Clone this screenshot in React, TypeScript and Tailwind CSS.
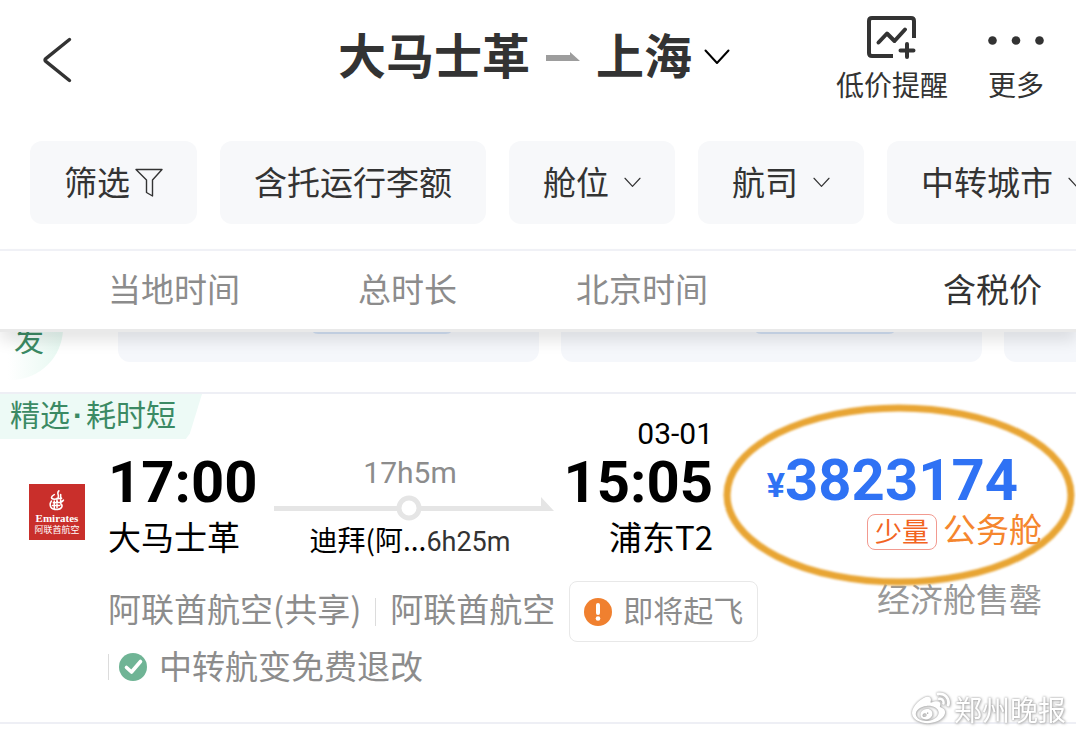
import React from 'react';
import { FaWeibo } from 'react-icons/fa6';

const FILTERS = [
  { label: '筛选', icon: 'funnel' },
  { label: '含托运行李额', icon: 'none' },
  { label: '舱位', icon: 'chevron' },
  { label: '航司', icon: 'chevron' },
  { label: '中转城市', icon: 'chevron' },
];

const Chevron: React.FC<{ className: string; stroke: number }> = ({ className, stroke }) => (
  <svg viewBox="0 0 26 16" className={className} fill="none" stroke="currentColor" strokeWidth={stroke} strokeLinecap="round" strokeLinejoin="round">
    <path d="M1.5 1.5 L13 14 L24.5 1.5" />
  </svg>
);

const Funnel: React.FC = () => (
  <svg viewBox="0 0 28 30" className="w-7 h-[30px] mt-1 ml-[5px] shrink-0" fill="none" stroke="#333" strokeWidth="1.4" strokeLinejoin="round">
    <path d="M1 1.5 H27 L17.5 12 V28 L11.5 24.5 V12 Z" />
  </svg>
);

const Header: React.FC = () => (
  <header className="grid grid-cols-[1fr_auto_1fr] items-center pt-4 pb-[37px] pl-6 pr-8 text-[#333]">
    <button aria-label="返回" className="w-12 h-14 flex items-center justify-end">
      <svg viewBox="0 0 30 46" className="w-[30px] h-[46px]" fill="none" stroke="currentColor" strokeWidth="3.4" strokeLinecap="round" strokeLinejoin="round">
        <path d="M27.5 2.5 L3.8 21.6 Q2.2 23 3.8 24.4 L27.5 43.5" />
      </svg>
    </button>
    <button className="flex items-center pb-3.5">
      <h1 className="flex items-center text-[48px] leading-[56px] font-bold">
        大马士革
        <svg viewBox="0 0 34 10" className="w-[34px] h-[10px] mx-4 mt-2">
          <path d="M0 3 H24 V0 L34 9 H0 Z" fill="#9d9d9d" />
        </svg>
        上海
      </h1>
      <Chevron className="w-[26px] h-4 ml-3 mt-2 text-black" stroke={2} />
    </button>
    <div className="flex justify-end gap-10">
      <button className="flex flex-col items-center">
        <svg viewBox="0 0 50 44" className="w-[50px] h-11" fill="none" stroke="currentColor" strokeWidth="4" strokeLinejoin="round">
          <path d="M47 22 V5 Q47 2 44 2 H5 Q2 2 2 5 V37 Q2 40 5 40 H26" />
          <path d="M11.5 26.5 L20 17.5 L27.5 25 L38 13.5" strokeLinecap="round" />
          <path d="M40 28 V41 M33.5 34.5 H46.5" strokeLinecap="round" />
        </svg>
        <span className="text-[28px] leading-10 mt-1 whitespace-nowrap">低价提醒</span>
      </button>
      <button className="flex flex-col items-center">
        <svg viewBox="0 0 56 44" className="w-14 h-11" fill="currentColor">
          <circle cx="4.5" cy="24.5" r="4.3" />
          <circle cx="28" cy="24.5" r="4.3" />
          <circle cx="51.5" cy="24.5" r="4.3" />
        </svg>
        <span className="text-[28px] leading-10 mt-1 whitespace-nowrap">更多</span>
      </button>
    </div>
  </header>
);

const FilterBar: React.FC = () => (
  <nav className="flex gap-[23px] pl-[30px] pb-[25px] overflow-hidden">
    {FILTERS.map((filter) => (
      <button
        key={filter.label}
        className="flex items-center shrink-0 px-[34px] pb-1 h-[83px] rounded-xl bg-[#f7f8fa] text-[33px] leading-[48px] text-[#333]"
      >
        {filter.label}
        {filter.icon === 'funnel' && <Funnel />}
        {filter.icon === 'chevron' && <Chevron className="w-[17px] h-[11px] ml-[15px] mt-1" stroke={1.8} />}
      </button>
    ))}
  </nav>
);

const ColumnTitles: React.FC = () => (
  <div className="relative z-10 grid grid-cols-[250px_218px_1fr_auto] items-center h-20 pb-1 pl-[108px] pr-[34px] border-t-2 border-[#f0f1f6] bg-white text-[33px] leading-[48px] text-[#8c8c8c] shadow-[0_3px_0_#e9e9e9,0_12px_14px_0_rgba(0,0,0,0.1)]">
    <span>当地时间</span>
    <span>总时长</span>
    <span>北京时间</span>
    <span className="text-[#333]">含税价</span>
  </div>
);

const PreviousFlight: React.FC = () => (
  <div className="flex items-end h-[63px] overflow-hidden">
    <div className="shrink-0 w-[55px] ml-2 mb-3 h-24 pl-1.5 pt-[36px] rounded-br-[52px] bg-linear-to-r from-white to-[#e6f8f1] text-[30px] leading-9 text-[#3b8a64]">
      发
    </div>
    <div className="flex gap-[22px] ml-[55px] mb-[30px]">
      {[0, 1, 2].map((card) => (
        <div key={card} className="shrink-0 w-[421px] h-20 pl-[192px] rounded-xl bg-[#f5f7fb]">
          <div className="w-[144px] h-[52px] rounded-lg border-2 border-[#d3e1f5]" />
        </div>
      ))}
    </div>
  </div>
);

const AirlineLogo: React.FC = () => (
  <div className="w-14 h-14 mb-[26px] shrink-0 flex flex-col items-center bg-[#c92f2b] text-white">
    <svg viewBox="0 0 20 24" className="w-5 h-[22px] mt-1.5 shrink-0" fill="none" stroke="white" strokeWidth="1.7" strokeLinecap="round">
      <path d="M12 1 C9 4 13 5 11 9 M7 5 C3 7 3 10 7 10 L15 9 M10 9 V19 M14 5 V14 M17 11 C15 15 12 13 6 14" />
      <path d="M4 12 C1 16 3 22 9 21 C15 22 17 17 14 15 M5 17 H13 M7 12 V20" />
    </svg>
    <span className="font-['Liberation_Serif','Noto_Sans_CJK_SC',serif] font-bold text-[11px] leading-3">Emirates</span>
    <span className="text-[9px] leading-3 whitespace-nowrap">阿联酋航空</span>
  </div>
);

const Route: React.FC = () => (
  <div className="flex items-end">
    <div className="w-[148px] whitespace-nowrap">
      <div className="font-[Roboto,sans-serif] font-bold text-[58px] leading-[60px]">17:00</div>
      <div className="text-[33px] leading-[48px] pb-1.5">大马士革</div>
    </div>
    <div className="flex flex-col items-center w-[280px] ml-[18px] whitespace-nowrap">
      <div className="pr-2 font-[Roboto,sans-serif] text-[30px] leading-9 text-[#8c8c8c]">17h5m</div>
      <svg viewBox="0 0 280 26" className="w-[280px] h-[26px] mt-1">
        <path d="M0 11 H267 V2 L280 16 H0 Z" fill="#e5e5e5" />
        <circle cx="135" cy="13" r="10" fill="white" stroke="#e5e5e5" strokeWidth="5" />
      </svg>
      <div className="pr-2 text-[28px] leading-9 pb-1.5">
        迪拜(阿...<span className="font-[Roboto,sans-serif] text-[27px] text-[#333]">6h25m</span>
      </div>
    </div>
    <div className="w-[146px] ml-[13px] flex flex-col items-end whitespace-nowrap">
      <div className="font-[Roboto,sans-serif] text-[30px] leading-9">03-01</div>
      <div className="font-[Roboto,sans-serif] font-bold text-[58px] leading-[60px]">15:05</div>
      <div className="text-[33px] leading-[48px] pb-1.5">浦东T2</div>
    </div>
  </div>
);

const Notices: React.FC = () => (
  <div className="text-[33px] text-[#8c8c8c] whitespace-nowrap">
    <div className="flex items-center mt-[15px]">
      <span className="leading-[48px] pb-2">阿联酋航空(共享)</span>
      <span className="w-px h-7 mx-[14px] bg-[#dcdcdc]" />
      <span className="leading-[48px] pb-2">阿联酋航空</span>
      <span className="flex items-center h-[61px] ml-[14px] px-[14px] rounded-lg border border-[#e8e8e8] text-[30px] leading-10">
        <svg viewBox="0 0 28 28" className="w-7 h-7 mr-[11px]">
          <circle cx="14" cy="14" r="14" fill="#f0802f" />
          <rect x="12" y="5" width="4" height="12" rx="2" fill="white" />
          <circle cx="14" cy="20.5" r="2.3" fill="white" />
        </svg>
        <span className="pb-1.5">即将起飞</span>
      </span>
    </div>
    <div className="flex items-center">
      <span className="w-px h-[26px] bg-[#dcdcdc]" />
      <svg viewBox="0 0 28 28" className="w-7 h-7 ml-[10px] mr-3">
        <circle cx="14" cy="14" r="14" fill="#6fb495" />
        <path d="M7.5 14.5 L12.5 19 L21.5 8.5" fill="none" stroke="white" strokeWidth="3.6" strokeLinecap="round" strokeLinejoin="round" />
      </svg>
      <span className="leading-[46px] pb-1">中转航变免费退改</span>
    </div>
  </div>
);

const Price: React.FC = () => (
  <div className="ml-auto self-start flex flex-col items-end pt-[34px] pr-[34px] whitespace-nowrap">
    <div className="pr-6 font-[Roboto,sans-serif] font-bold text-[58px] leading-[60px] text-[#2f72f4]">
      <span className="text-[34px] leading-none align-middle">¥</span>3823174
    </div>
    <div className="flex items-center text-[33px] text-[#f5862e]">
      <span className="px-[7px] pb-0.5 mr-[6px] rounded-lg border border-[#f29a90] text-[27px] leading-8 text-[#f2641f]">少量</span>
      <span className="leading-9 pb-2">公务舱</span>
    </div>
    <div className="mt-5 text-[33px] leading-[48px] text-[#999]">经济舱售罄</div>
  </div>
);

const FlightCard: React.FC = () => (
  <article className="relative flex pl-[29px] pt-[22px] pb-[30px] border-y-2 border-[#eeeff5] text-black">
    <div className="absolute left-0 top-0 w-[202px] h-[45px] bg-[#edfaf6] [clip-path:polygon(0_0,100%_0,94%_88%,92%_100%,0_100%)] pl-[10px] text-[30px] leading-[39px] text-[#3b8a64] whitespace-nowrap">
      精选<span className="mx-[3px] font-['Liberation_Sans',sans-serif] font-bold">·</span>耗时短
    </div>
    <div className="flex items-end mr-[23px] h-[150px]"><AirlineLogo /></div>
    <div className="shrink-0">
      <Route />
      <Notices />
    </div>
    <Price />
    <svg viewBox="0 0 356 192" className="absolute right-0 top-[6px] w-[356px] h-[192px] blur-[1px] pointer-events-none" fill="none" stroke="#e8a534" strokeWidth="7">
      <ellipse cx="179" cy="95" rx="172" ry="87" />
    </svg>
  </article>
);

const App: React.FC = () => (
  <main className="relative min-h-screen overflow-hidden bg-white font-['Noto_Sans_CJK_SC',sans-serif]">
    <Header />
    <FilterBar />
    <ColumnTitles />
    <PreviousFlight />
    <FlightCard />
    <div className="absolute right-[10px] bottom-[6px] flex items-center gap-1 text-[28px] leading-10 text-white [filter:drop-shadow(0_0_1px_#999)_drop-shadow(1px_1px_1px_#ccc)]">
      <FaWeibo className="w-[38px] h-[38px]" />
      <span>郑州晚报</span>
    </div>
  </main>
);

export default App;
